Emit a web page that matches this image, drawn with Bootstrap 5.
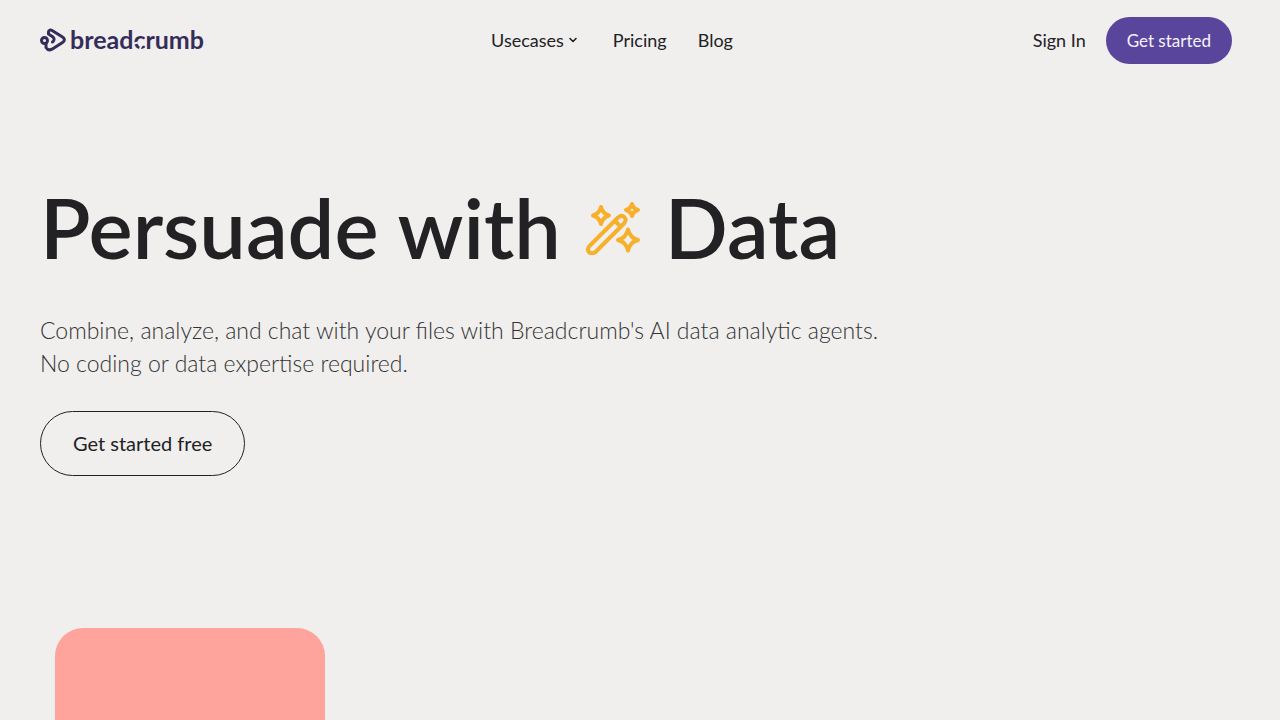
<!DOCTYPE html>
<html lang="en">
<head>
<meta charset="utf-8">
<meta name="viewport" content="width=device-width, initial-scale=1">
<title>Breadcrumb | Persuade with Data</title>
<link rel="stylesheet" href="https://cdn.jsdelivr.net/npm/bootstrap@5.3.0/dist/css/bootstrap.min.css">
<style>
:root { --ink: #222224; --violet: #59469c; --logo: #352d59; --paper: #f0efed; }
body { background: var(--paper); color: var(--ink); font-family: Lato, "Liberation Sans", sans-serif; overflow-x: hidden; }
.site-nav { height: 80px; padding: 0 48px 0 40px; font-size: 18px; line-height: 24px; }
.side { flex: 1 1 0; }
.site-nav .nav-item-link { color: var(--ink); text-decoration: none; }
.main-links { gap: 31px; }
.logo { color: var(--logo); font-size: 25px; line-height: 30px; font-weight: 700; gap: 4px; }
.wordmark { position: relative; margin-bottom: 2px; }
.wordmark svg { position: absolute; left: 63px; top: 7px; }
.btn-start { --bs-btn-color: #f5f3fb; --bs-btn-bg: var(--violet); --bs-btn-hover-color: #fff; --bs-btn-hover-bg: #48388a; --bs-btn-border-width: 0; font-size: 17px; line-height: 24px; padding: 12px 21px 11px; }
.hero { padding: 101px 40px 0; }
.hero h1 { font-size: 83px; line-height: 92px; font-weight: 600; gap: 24px; }
.hero p { font-size: 23px; line-height: 33px; font-weight: 300; color: #333335; margin: 41px 0 31px; }
.btn-free { --bs-btn-color: var(--ink); --bs-btn-border-color: var(--ink); --bs-btn-hover-bg: var(--ink); --bs-btn-hover-color: #fff; font-size: 20px; line-height: 27px; padding: 18px 32px; }
.cards { padding: 152px 55px 0; }
.tile { max-width: 270px; height: 360px; border-radius: 28px; background: #ffa39d; }
</style>
</head>
<body>
<header class="site-nav d-flex align-items-center">
  <div class="side">
    <a class="logo d-inline-flex align-items-center text-decoration-none" href="#">
      <svg width="26" height="24" viewBox="0 0 26 24" fill="none" stroke="currentColor" stroke-width="3" stroke-linecap="round" stroke-linejoin="round" aria-hidden="true">
        <circle cx="4.500" cy="12.500" r="3"/>
        <path d="M8.500 6V4C8.500 2 10.500 1.500 12.500 2.700L22.500 9C25 10.500 25 13 22.500 14.500L12 21.200C9.500 22.500 7.500 22 6 19.500V15.500M8.500 6L13 9C14.500 10.500 14.500 12.500 12.500 14"/>
      </svg>
      <span class="wordmark">breadcrumb<svg width="14" height="18" viewBox="0 0 14 18" fill="none" stroke="#f0efed" stroke-width="2" aria-hidden="true"><path d="M1 12.500L7 11M7 18L9 12"/></svg></span>
    </a>
  </div>
  <nav class="main-links d-flex me-5">
    <a class="nav-item-link d-flex align-items-center gap-1 pe-1" href="#">Usecases
      <svg width="10" height="8" viewBox="0 0 10 8" fill="none" stroke="currentColor" stroke-width="1.600" stroke-linecap="round" stroke-linejoin="round" aria-hidden="true"><path d="M2 2.500l3 3 3-3"/></svg>
    </a>
    <a class="nav-item-link" href="#">Pricing</a>
    <a class="nav-item-link" href="#">Blog</a>
  </nav>
  <div class="side d-flex align-items-center justify-content-end">
    <a class="nav-item-link me-3" href="#">Sign In</a>
    <button type="button" class="btn btn-start rounded-pill ms-1">Get started</button>
  </div>
</header>
<main>
  <section class="hero">
    <h1 class="d-flex flex-wrap align-items-center mb-0"><span>Persuade with</span>
      <svg width="56" height="56" viewBox="0 0 56 56" fill="none" stroke="#f6b02c" stroke-width="4" stroke-linecap="round" stroke-linejoin="round" aria-hidden="true">
        <g transform="translate(0 1.500)"><path d="M4.500 45.500L33 17C38 13 43 18 39 23L10.500 51.500C5 55 .500 50 4.500 45.500ZM30 20.500L35.500 26"/>
        <path d="M16 6.500Q17.500 13 24 15Q17.500 17 16 23.500Q14.500 17 8 15Q14.500 13 16 6.500ZM47 3.500Q48 8 53 9.500Q48 11 47 15.500Q46 11 41 9.500Q46 8 47 3.500ZM43 29Q45 37.500 53 39.500Q45 41.500 43 50Q41 41.500 33 39.500Q41 37.500 43 29Z"/></g>
      </svg>
      <span>Data</span></h1>
    <p>Combine, analyze, and chat with your files with Breadcrumb's AI data analytic agents.<br>No coding or data expertise required.</p>
    <button type="button" class="btn btn-free rounded-pill">Get started free</button>
  </section>
  <section class="cards"><div class="tile"></div></section>
</main>
<script src="https://cdn.jsdelivr.net/npm/bootstrap@5.3.0/dist/js/bootstrap.bundle.min.js"></script>
</body>
</html>
